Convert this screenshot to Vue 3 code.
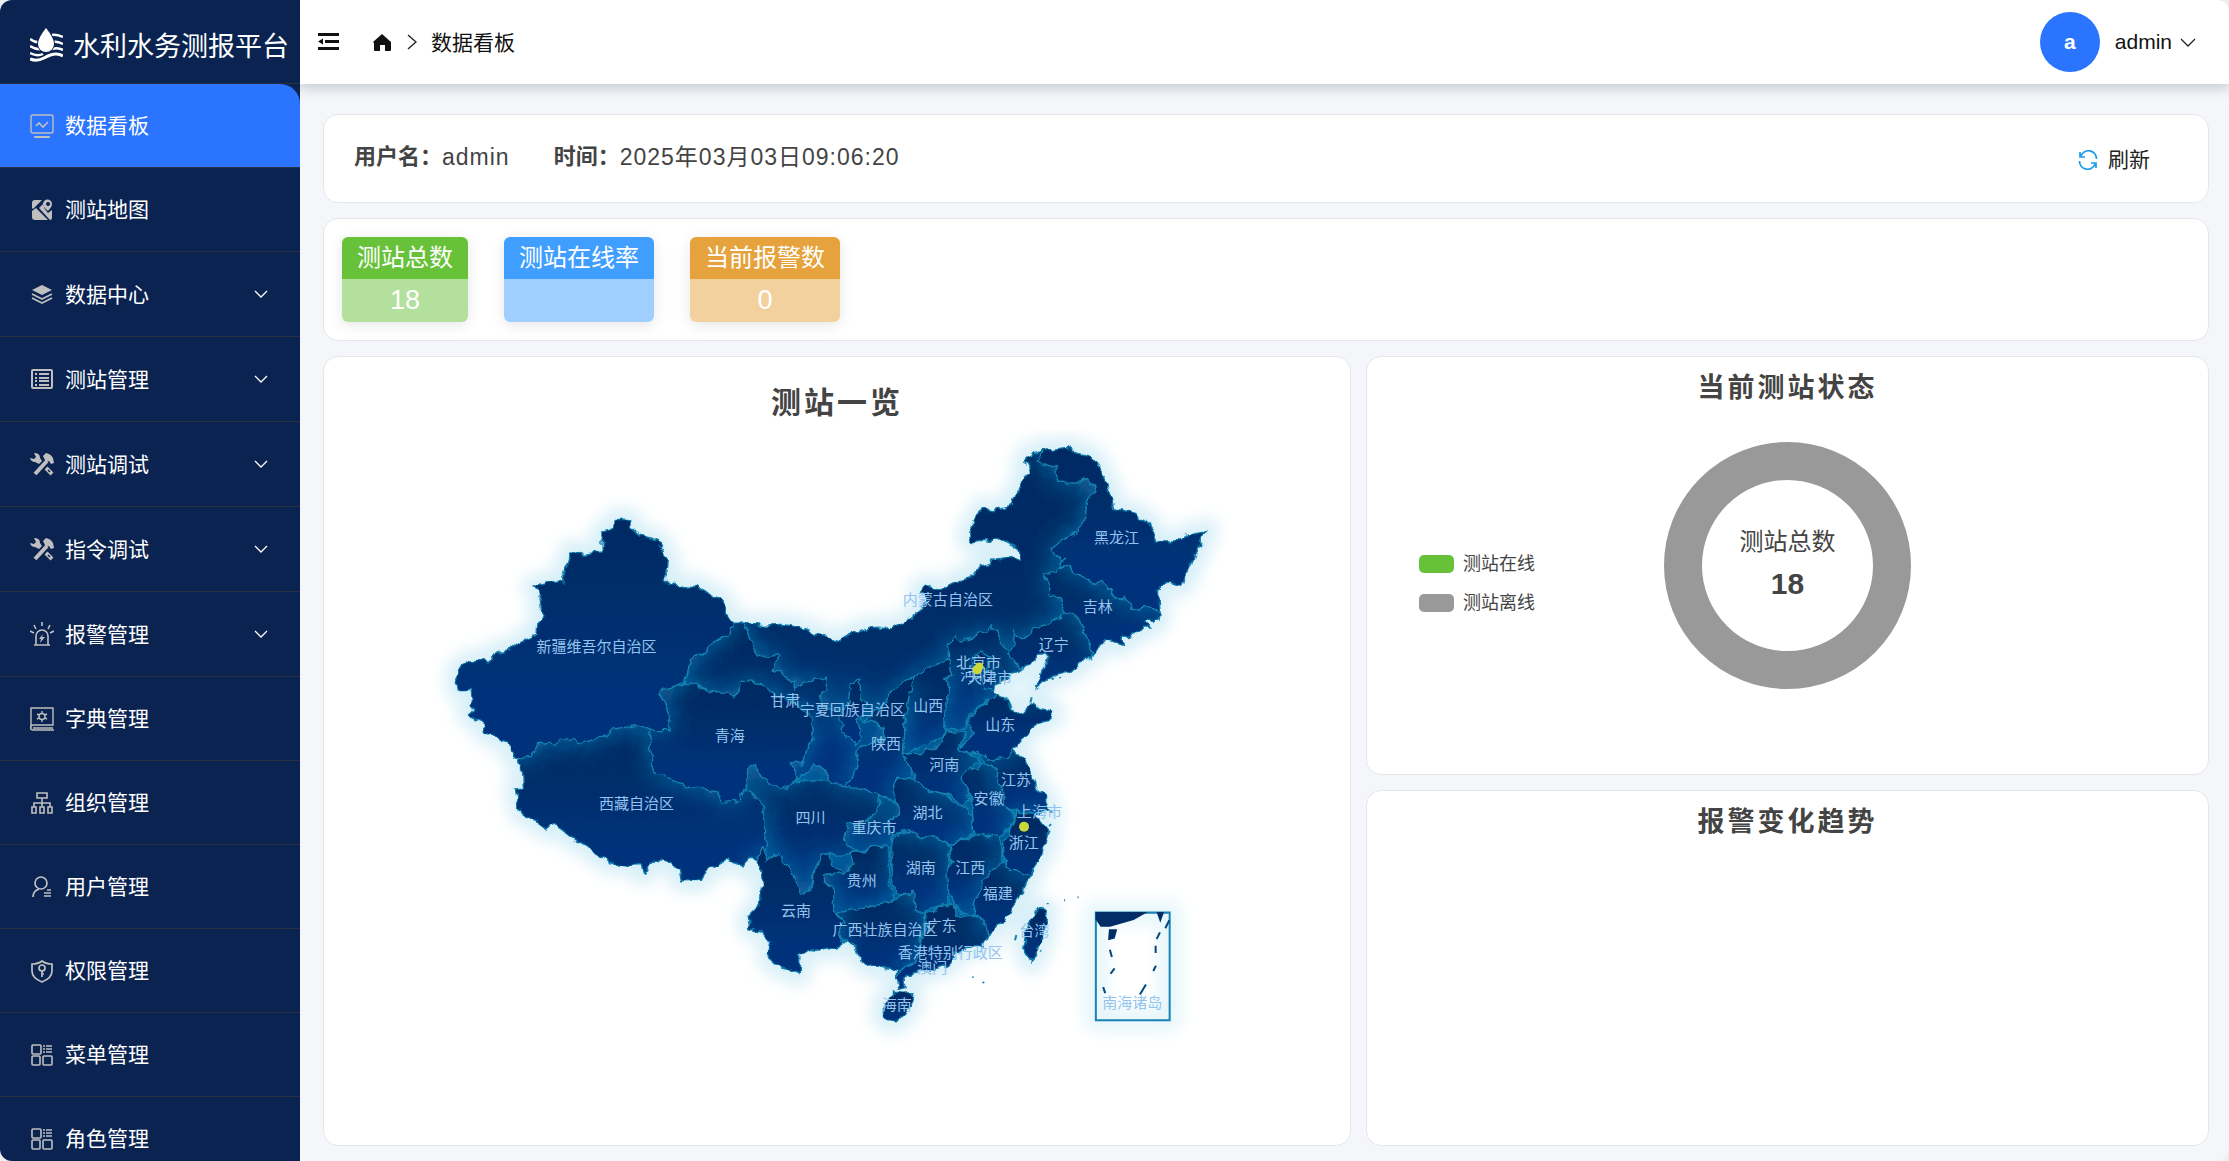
<script setup>
import { ref } from 'vue'

const active = ref('数据看板')

const menu = [
  { name: '数据看板', icon: 'board' },
  { name: '测站地图', icon: 'map' },
  { name: '数据中心', icon: 'layers', sub: true },
  { name: '测站管理', icon: 'list', sub: true },
  { name: '测站调试', icon: 'tools', sub: true },
  { name: '指令调试', icon: 'tools', sub: true },
  { name: '报警管理', icon: 'alarm', sub: true },
  { name: '字典管理', icon: 'book' },
  { name: '组织管理', icon: 'org' },
  { name: '用户管理', icon: 'user' },
  { name: '权限管理', icon: 'shield' },
  { name: '菜单管理', icon: 'grid' },
  { name: '角色管理', icon: 'grid' },
]

const stats = [
  { name: '测站总数', value: '18', tone: 'green' },
  { name: '测站在线率', value: '', tone: 'blue' },
  { name: '当前报警数', value: '0', tone: 'orange' },
]

const outline =
  'M530 268 570 268 572 290 600 315 630 325 655 332 670 360 686 390 682 420 674 445 690 460 725 465 775 470 810 490 845 508 858 545 880 578 912 578 960 585 1030 582 1075 590 1120 608 1160 620 1200 632 1240 608 1290 595 1360 592 1400 572 1445 535 1460 510 1438 485 1455 465 1500 478 1525 474 1550 448 1595 440 1615 408 1640 402 1660 390 1700 385 1740 386 1738 370 1720 345 1700 335 1680 322 1655 334 1625 330 1595 335 1583 320 1605 270 1627 234 1660 245 1700 228 1720 222 1717 208 1740 165 1752 140 1770 130 1768 105 1748 96 1775 68 1805 62 1880 52 1915 68 1950 75 1975 110 1995 155 2010 190 2025 240 2085 250 2125 280 2140 310 2150 335 2205 335 2240 315 2297 300 2280 320 2283 345 2265 365 2250 410 2223 465 2180 455 2150 478 2156 550 2152 570 2110 570 2130 590 2105 590 2085 612 2045 622 2045 642 1995 628 1960 670 1925 695 1895 722 1840 735 1788 772 1798 745 1805 718 1825 688 1812 673 1785 675 1770 700 1745 713 1720 730 1695 745 1665 762 1662 785 1685 800 1705 808 1715 835 1725 850 1745 845 1770 820 1805 835 1840 842 1835 862 1795 875 1770 895 1745 925 1720 955 1740 982 1755 995 1770 1025 1785 1070 1815 1100 1818 1125 1830 1140 1785 1150 1800 1175 1825 1190 1815 1250 1785 1300 1760 1350 1730 1415 1705 1445 1670 1490 1640 1515 1625 1545 1580 1550 1540 1570 1525 1600 1480 1615 1440 1620 1395 1635 1388 1645 1398 1670 1380 1675 1368 1640 1370 1615 1340 1610 1290 1608 1260 1585 1250 1550 1215 1530 1190 1555 1165 1550 1140 1558 1110 1552 1080 1570 1078 1630 1055 1618 1020 1610 985 1580 995 1540 965 1500 930 1490 925 1460 965 1420 968 1360 962 1315 940 1280 925 1280 910 1308 860 1285 800 1320 785 1348 725 1350 720 1320 695 1295 640 1288 612 1330 605 1298 550 1302 505 1292 480 1275 430 1240 410 1230 365 1195 345 1180 325 1198 290 1170 245 1148 235 1115 228 1075 252 1070 250 1030 235 1000 240 983 220 975 212 935 175 925 135 905 130 875 85 850 100 835 92 780 58 780 48 745 60 715 100 690 155 692 170 665 210 658 260 625 290 612 292 580 308 560 305 525 295 480 282 470 345 452 375 455 370 435 382 400 395 362 430 372 488 365 487 305 520 295Z'
const islands = [
  'M1360 1685 1415 1682 1410 1730 1365 1775 1330 1760 1330 1715Z',
  'M1800 1430 1818 1440 1810 1510 1775 1595 1748 1550 1760 1490Z',
]

// Drawn back to front: each shape covers the loose edges of the ones before it.
const provinces = [
  'M1320 1095 1310 1140 1280 1170 1220 1180 1210 1230 1250 1265 1300 1245 1345 1250 1355 1210 1340 1175 1385 1145 1360 1115Z',
  'M920 990 960 1010 990 1060 1200 1040 1260 1070 1320 1095 1310 1140 1280 1175 1220 1180 1210 1230 1250 1260 1225 1270 1155 1270 1125 1310 1100 1400 1060 1400 900 1300 900 1050Z',
  'M912 578 930 630 955 680 1015 670 1018 690 1000 718 1040 735 1070 775 1090 752 1140 748 1165 740 1160 775 1140 800 1140 825 1210 850 1255 860 1330 885 1330 920 1255 955 1250 1010 1228 1050 1215 1065 1175 1060 1150 1015 1125 995 1090 1030 1080 1045 1050 1040 1000 950 700 800 735 755 755 685 790 670 825 632 870 610 880 580Z',
  'M180 900 400 850 640 860 860 1090 925 1075 960 1110 975 1160 980 1250 985 1285 950 1290 900 1400 150 1400Z',
  'M655 788 735 755 800 775 840 790 890 798 905 752 970 760 1010 795 1060 820 1110 850 1120 900 1100 970 1085 1000 1050 990 1075 1040 1045 1070 1000 1065 960 1040 950 1005 925 1000 920 1060 900 1110 850 1115 830 1080 760 1070 700 1050 650 1030 635 985 630 900 680 895 690 850 670 810Z',
  'M1545 612 1525 650 1530 690 1540 735 1510 760 1525 790 1510 860 1515 895 1570 900 1585 860 1640 810 1690 800 1760 715 1715 680 1705 655 1680 640 1665 605 1650 588 1635 605 1600 622 1560 632Z',
  'M1595 690 1620 662 1650 680 1640 720 1600 725Z',
  'M1640 715 1665 740 1662 780 1635 775 1625 745Z',
  'M1530 685 1465 710 1420 738 1408 780 1395 860 1390 970 1465 940 1510 915 1512 860 1530 765 1510 745 1540 735Z',
  'M1420 738 1355 785 1335 815 1280 870 1330 890 1330 925 1255 955 1250 1010 1228 1050 1215 1068 1260 1070 1320 1095 1362 1115 1365 1080 1360 1045 1410 1045 1415 1020 1390 970 1395 860 1410 780Z',
  'M1260 745 1230 765 1225 815 1200 855 1210 905 1250 940 1265 905 1250 870 1270 850 1278 820 1262 800Z',
  'M1300 1245 1275 1260 1225 1270 1245 1300 1210 1325 1155 1330 1150 1360 1180 1370 1185 1450 1240 1440 1280 1430 1320 1420 1360 1405 1350 1350 1345 1250Z',
  'M1185 1450 1215 1470 1190 1500 1220 1540 1240 1640 1360 1630 1380 1615 1430 1590 1440 1550 1455 1440 1430 1440 1425 1385 1400 1385 1360 1410 1320 1420 1280 1430Z',
  'M1355 1220 1352 1270 1360 1350 1365 1390 1420 1385 1430 1440 1460 1440 1490 1425 1530 1420 1525 1360 1530 1310 1525 1240 1480 1215 1440 1220 1410 1200Z',
  'M1360 1045 1365 1110 1385 1145 1340 1175 1355 1210 1410 1200 1440 1220 1480 1215 1530 1240 1600 1210 1595 1160 1580 1130 1540 1115 1515 1090 1460 1075 1430 1050 1410 1045Z',
  'M1515 900 1510 935 1450 965 1390 972 1415 1020 1430 1050 1460 1075 1520 1090 1560 1120 1590 1115 1580 1075 1562 1045 1585 1005 1620 1000 1605 980 1560 955 1575 910Z',
  'M1530 1240 1535 1290 1520 1330 1530 1390 1555 1440 1595 1460 1610 1400 1630 1350 1670 1310 1690 1270 1670 1215 1625 1205 1590 1220Z',
  'M1585 1005 1562 1045 1585 1080 1595 1115 1600 1205 1625 1205 1670 1215 1710 1195 1725 1150 1690 1130 1695 1095 1670 1050 1665 1010 1630 995 1610 1020Z',
  'M1455 1440 1460 1490 1440 1550 1430 1590 1380 1620 1350 1690 1440 1690 1640 1580 1650 1515 1630 1465 1595 1455 1550 1460 1545 1430 1530 1420 1490 1430 1480 1450Z',
  'M1690 1285 1660 1315 1630 1350 1610 1400 1600 1450 1630 1465 1640 1515 1700 1510 1800 1370 1760 1328 1710 1320Z',
  'M1610 975 1630 995 1665 1010 1670 1050 1695 1095 1690 1130 1730 1145 1840 1145 1820 1050 1760 990 1710 950 1670 985 1640 965Z',
  'M1730 1145 1710 1195 1690 1230 1690 1270 1710 1320 1760 1328 1800 1350 1850 1250 1840 1150Z',
  'M1580 880 1600 910 1558 955 1590 975 1612 962 1640 985 1700 980 1725 950 1900 900 1880 760 1680 770 1665 800 1620 830Z',
  'M1885 545 1840 575 1780 600 1745 625 1725 600 1722 640 1705 670 1740 715 1740 800 1960 760 1955 665 1940 610 1920 570Z',
  'M1810 425 1825 460 1825 495 1855 495 1875 545 1920 570 1940 610 1955 670 2180 660 2155 545 2120 520 2075 540 2055 500 2035 510 2005 480 1985 460 1925 445 1895 420 1885 408 1855 408 1840 430Z',
  'M1808 65 1790 98 1845 110 1852 160 1925 158 1940 145 1965 175 1938 220 1935 262 1910 310 1870 325 1835 355 1860 390 1875 380 1855 405 1885 408 1895 420 1925 445 1985 460 2005 480 2035 510 2055 500 2075 540 2120 520 2155 545 2320 500 2320 250 2040 40 1840 30Z',
  'M970 1250 945 1290 880 1450 900 1650 1140 1650 1215 1550 1190 1500 1215 1470 1185 1450 1180 1370 1150 1360 1155 1330 1210 1325 1175 1300 1170 1270 1150 1270 1125 1315 1115 1380 1080 1390 1055 1325 1010 1265 985 1290Z',
  'M245 983 275 980 295 938 345 942 370 922 430 938 500 915 520 895 590 885 640 900 685 900 690 850 670 810 655 788 735 755 755 685 790 670 825 632 870 610 880 578 900 200 0 200 0 1000Z',
]

const labels = [
  ['新疆维吾尔自治区', 471, 653], ['西藏自治区', 591, 1123], ['青海', 870, 918],
  ['甘肃', 1036, 813], ['宁夏回族自治区', 1237, 840], ['四川', 1112, 1163],
  ['云南', 1068, 1442], ['贵州', 1265, 1352], ['重庆市', 1302, 1195],
  ['湖南', 1442, 1313], ['湖北', 1462, 1150], ['河南', 1512, 1005],
  ['陕西', 1338, 941], ['山西', 1464, 827], ['山东', 1680, 885],
  ['江苏', 1727, 1051], ['安徽', 1645, 1107], ['上海市', 1797, 1147],
  ['浙江', 1750, 1238], ['江西', 1590, 1313], ['福建', 1672, 1390],
  ['台湾', 1782, 1502], ['广东', 1504, 1488], ['广西壮族自治区', 1335, 1499],
  ['香港特别行政区', 1530, 1568], ['澳门', 1476, 1612], ['海南', 1370, 1724],
  ['南海诸岛', 2075, 1718], ['内蒙古自治区', 1523, 510], ['黑龙江', 2028, 325],
  ['吉林', 1972, 532], ['辽宁', 1840, 645], ['河北', 1605, 735],
  ['天津市', 1648, 745], ['北京市', 1615, 700],
]
</script>

<template>
  <div class="shell">
    <aside class="sidebar">
      <div class="brand">
        <svg class="logo" viewBox="0 0 33 34" aria-hidden="true">
          <g fill="none" stroke="#fff" stroke-width="2.4">
            <path d="M0 11q5 4 10 3M0 18q6 4 12 3M22 7q4-1 11 2M23 14q4-1 10 2M22 21q6-2 11 1" />
            <path d="M0 31q7 3 14-1t12-4q4 0 7 2" stroke-width="3" />
            <path d="M0 25q7 4 13 1" />
          </g>
          <path
            d="M16 0q8 10 8 16a8 8 0 0 1-16 0q0-6 8-16Z"
            fill="#fff"
            stroke="#0a2351"
            stroke-width="2"
            paint-order="stroke"
          />
        </svg>
        <h1>水利水务测报平台</h1>
      </div>
      <nav>
        <button
          v-for="item in menu"
          :key="item.name"
          type="button"
          class="item"
          :class="{ active: item.name === active, sub: item.sub }"
          @click="active = item.name"
        >
          <svg class="icon" viewBox="0 0 24 24" fill="none" stroke="currentColor" stroke-width="1.4" aria-hidden="true">
            <g v-if="item.icon === 'board'">
              <rect x="1" y="1" width="22" height="18" rx="2" />
              <path d="M6 12l3-3 4 4 5-5" stroke-width="1.7" />
              <path d="M5 23h14" stroke-width="2" stroke-linecap="round" />
            </g>
            <g v-else-if="item.icon === 'map'" fill="currentColor" stroke="none">
              <path d="M2 5q0-3 3-3h7L3 11l-1-1ZM2 13l4-3 12 12H5q-3 0-3-3ZM22 12v7q0 3-2 3L9 10l4-4q1 5 5 9Z" />
              <path fill-rule="evenodd" d="M18 13q-5-4-5-7a4 4 0 0 1 9 0q0 3-4 7Zm0-9a2 2 0 1 0 .1 0Z" />
            </g>
            <g v-else-if="item.icon === 'layers'">
              <path d="M12 3l10 5-10 5L2 8Z" fill="currentColor" stroke="none" />
              <path d="M2 12l10 5 10-5M2 16l10 5 10-5" stroke-width="1.7" />
            </g>
            <g v-else-if="item.icon === 'list'">
              <rect x="2" y="3" width="20" height="18" rx="1" stroke-width="2" />
              <path d="M5 7h2M5 11h2M5 14h2M5 18h2M9 7h10M9 11h10M9 14h10M9 18h10" stroke-width="2" />
            </g>
            <g v-else-if="item.icon === 'tools'" stroke="currentColor">
              <path d="M5 22L17 9" stroke-width="4" />
              <path d="M13 4l3-3q5 1 7 5l1 5-3 1-2-3-3 1Z" fill="currentColor" stroke="none" />
              <path d="M4 1q6 0 6 5l2 3-3 3-4-2q-4 0-5-4l4 1 2-2Z" fill="currentColor" stroke="none" />
              <path d="M16 16l6 6" stroke-width="4" />
              <path d="M18 18l2 2" stroke="#0a2351" stroke-width="1.4" />
            </g>
            <g v-else-if="item.icon === 'alarm'">
              <path d="M4 23h16M6 23V14a6 6 0 0 1 12 0v9M12 0v4M4 3l2 4M20 3l-2 4M0 9l4 2M24 9l-4 2" stroke-width="1.6" />
              <path d="M13 12l-4 5h2l-1 4 5-6h-3Z" fill="currentColor" stroke="none" />
            </g>
            <g v-else-if="item.icon === 'book'">
              <path d="M1 21V1h22v17H3a2 2 0 0 0 0 5h21M3 21h20" />
              <circle cx="12" cy="9.5" r="3" />
              <path d="M12 4v2M12 13v2M7 7l2 1M15 11l2 1M7 12l2-1M15 8l2-1" />
            </g>
            <g v-else-if="item.icon === 'org'" stroke-width="1.6">
              <path d="M7 2h10v5H7ZM2 16h4v6H2ZM10 16h4v6h-4ZM18 16h4v6h-4ZM12 7v9M4 16v-4h16v4" />
            </g>
            <g v-else-if="item.icon === 'user'" stroke-width="1.7">
              <circle cx="11" cy="8" r="6" />
              <path d="M3 22q0-6 6-8M17 15h4M14 18h7M14 21h7" />
            </g>
            <g v-else-if="item.icon === 'shield'" stroke-width="1.7">
              <path d="M12 2q4 3 10 3v7q0 7-10 11Q2 19 2 12V5q6 0 10-3Z" />
              <circle cx="12" cy="9" r="3" />
              <path d="M12 12v6M12 15h2" />
            </g>
            <g v-else stroke-width="1.6">
              <rect x="2" y="2" width="9" height="9" rx="1" />
              <rect x="2" y="13" width="8" height="9" rx="1" />
              <rect x="13" y="13" width="9" height="9" rx="1" />
              <path d="M13 3h2M16 3h6M13 6h2M16 6h6M13 9h2M16 9h6" />
            </g>
          </svg>
          <span>{{ item.name }}</span>
          <svg v-if="item.sub" class="arrow" viewBox="0 0 14 8" aria-hidden="true">
            <path d="M1 1l6 6 6-6" fill="none" stroke="#fff" stroke-width="1.3" />
          </svg>
        </button>
      </nav>
    </aside>

    <div class="page">
      <header class="topbar">
        <button type="button" class="plain" aria-label="collapse">
          <svg width="22" height="18" viewBox="0 0 22 18" aria-hidden="true">
            <path d="M0 0h21v3H0ZM7 7h14v3H7ZM0 14h21v3H0ZM0 8.500l5-3v6Z" fill="#111" />
          </svg>
        </button>
        <a class="home" href="#" aria-label="home">
          <svg width="18" height="17" viewBox="0 0 18 17" aria-hidden="true">
            <path d="M9 0l9 8v8q0 1-1 1h-5v-6H7v6H2q-1 0-1-1V9L0 8Z" fill="#111" />
          </svg>
        </a>
        <svg class="sep" width="10" height="16" viewBox="0 0 10 16" aria-hidden="true">
          <path d="M1 1l8 7-8 7" fill="none" stroke="#222" stroke-width="1.4" />
        </svg>
        <span class="crumb">数据看板</span>
        <button type="button" class="account">
          <span class="avatar">a</span>
          <span>admin</span>
          <svg width="16" height="9" viewBox="0 0 16 9" aria-hidden="true">
            <path d="M1 1l7 7 7-7" fill="none" stroke="#222" stroke-width="1.3" />
          </svg>
        </button>
      </header>

      <main>
        <section class="card info">
          <b>用户名：</b><span class="val">admin</span>
          <b>时间：</b><span class="val">2025年03月03日09:06:20</span>
          <button type="button" class="refresh">
            <svg width="20" height="20" viewBox="0 0 20 20" aria-hidden="true">
              <g fill="none" stroke="#1e9ae8" stroke-width="1.7">
                <path d="M3 6a8 8 0 0 1 15.500 3M17 14a8 8 0 0 1-15.500-3M2 2v5h5M18 18v-5h-5" />
              </g>
            </svg>
            <span>刷新</span>
          </button>
        </section>

        <section class="card stats">
          <div v-for="s in stats" :key="s.name" class="stat" :class="s.tone">
            <div class="name">{{ s.name }}</div>
            <div class="num">{{ s.value }}</div>
          </div>
        </section>

        <div class="boards">
          <section class="card map">
            <h2>测站一览</h2>
            <svg class="china" viewBox="-309 0 3000 2100" role="img" aria-label="测站一览">
              <defs>
                <linearGradient id="land" x1="0" y1="0" x2="0" y2="1">
                  <stop offset="0" stop-color="#022b61" />
                  <stop offset=".35" stop-color="#022d69" />
                  <stop offset=".75" stop-color="#02327c" />
                  <stop offset="1" stop-color="#02327c" />
                </linearGradient>
                <clipPath id="shape"><path :d="outline" /></clipPath>
                <filter id="halo" x="-10%" y="-10%" width="120%" height="120%">
                  <feGaussianBlur stdDeviation="22" />
                </filter>
                <filter id="glow" x="-60%" y="-60%" width="220%" height="220%">
                  <feDropShadow dx="0" dy="0" stdDeviation="36" flood-color="#0f7cb4" flood-opacity=".8" />
                </filter>
                <filter id="coast" x="-5%" y="-5%" width="110%" height="110%">
                  <feTurbulence type="fractalNoise" baseFrequency=".035" numOctaves="2" seed="4" />
                  <feDisplacementMap in="SourceGraphic" scale="26" xChannelSelector="R" yChannelSelector="G" />
                </filter>
              </defs>

              <g filter="url(#halo)" fill="#a9dcee" stroke="#d9f0f8" stroke-width="70" stroke-linejoin="round">
                <path :d="outline" />
                <path v-for="d in islands" :key="d" :d="d" />
                <rect x="1966" y="1445" width="221" height="322" fill="#fff" stroke="#e6f6fa" />
              </g>

              <g filter="url(#coast)">
                <g clip-path="url(#shape)">
                  <path :d="outline" fill="url(#land)" />
                  <path
                    v-for="d in provinces"
                    :key="d"
                    :d="d"
                    fill="url(#land)"
                    stroke="#1484b0"
                    stroke-width="4"
                    filter="url(#glow)"
                  />
                </g>
                <path :d="outline" fill="none" stroke="#0b78aa" stroke-width="4" />
                <path v-for="d in islands" :key="d" :d="d" fill="url(#land)" stroke="#0b78aa" stroke-width="4" />
              </g>

              <g stroke="#1683b5" stroke-width="6">
                <path d="M1966 1445h221v322h-221Z" fill="none" />
                <path d="M1968 1446h142l-32 18-70 20h-26l-14-20ZM2152 1446h14l-7 20ZM2008 1498h18l-6 22-14 4Z" fill="#022d66" stroke="#022d66" />
                <path d="M2186 1468l-12 24M2158 1504l-10 20M2008 1556l6 22M2145 1544v22M2022 1612l-12 16M2146 1604l-8 16M1988 1668l6 18M2116 1660l-18 30" fill="none" stroke="#02477f" />
                <path d="M1871 1408h3M1911 1399h3M1598 1636v4M1628 1652l3 4M1826 1186l6-6M1828 1200l-6 12M1774 800l-4 16M1834 744l6 2M1858 740l2 3M1728 1512l-4 16M1800 1558l2 3M1822 1416v4" fill="none" />
              </g>

              <text v-for="[name, x, y] in labels" :key="name" :x="x" :y="y + 13">{{ name }}</text>
              <g fill="#ccd83a">
                <circle cx="1611" cy="718" r="14" />
                <circle cx="1617" cy="708" r="12" />
                <circle cx="1751" cy="1188" r="15" />
              </g>
            </svg>
          </section>

          <section class="card status">
            <h3>当前测站状态</h3>
            <div class="chart">
              <ul>
                <li><i class="on"></i>测站在线</li>
                <li><i></i>测站离线</li>
              </ul>
              <div class="donut">
                <span>测站总数</span>
                <strong>18</strong>
              </div>
            </div>
          </section>

          <section class="card trend">
            <h3>报警变化趋势</h3>
          </section>
        </div>
      </main>
    </div>
  </div>
</template>

<style>
body {
  margin: 0;
  background: #eceef0;
}
</style>

<style scoped>
* {
  box-sizing: border-box;
}
.shell {
  display: flex;
  height: 100vh;
  overflow: hidden;
  border-radius: 12px;
  background: #f5f6f9;
  color: #111;
  font-family: "Liberation Sans", "Noto Sans CJK SC", sans-serif;
  font-size: 21px;
}
button {
  border: 0;
  background: none;
  color: inherit;
  font: inherit;
  cursor: pointer;
}
h1, h2, h3, ul {
  margin: 0;
  padding: 0;
}
.sidebar {
  position: relative;
  z-index: 1;
  flex: none;
  width: 300px;
  overflow: hidden;
  background: #0a2351;
  color: #fff;
}
.brand {
  display: flex;
  align-items: center;
  gap: 10px;
  height: 84px;
  padding: 6px 0 0 30px;
  border-bottom: 1px solid #2a3140;
  white-space: nowrap;
}
.brand h1 {
  font-size: 27px;
  font-weight: 400;
}
.logo {
  flex: none;
  width: 33px;
  height: 34px;
}
.item {
  display: flex;
  align-items: center;
  width: 100%;
  height: 84px;
  padding: 0 32px 0 30px;
  border-bottom: 1px solid #2a3140;
  text-align: left;
}
.item.sub {
  height: 85px;
}
.item.active {
  border-top-right-radius: 20px;
  background: #2a74ff;
}
.item span, .crumb {
  padding-bottom: 3px;
}
.icon {
  width: 24px;
  height: 24px;
  margin-right: 11px;
  color: #bfbfbf;
}
.arrow {
  width: 14px;
  height: 8px;
  margin-left: auto;
}
.page {
  flex: 1;
  min-width: 0;
}
.topbar {
  position: relative;
  display: flex;
  align-items: center;
  height: 84px;
  padding: 0 33px 0 18px;
  background: #fff;
  box-shadow: 0 2px 12px 2px #c3cbd2;
}
.plain {
  display: flex;
  padding: 0;
}
.home {
  display: flex;
  margin-left: 33px;
}
.sep {
  margin: 0 14px 0 16px;
}
.account {
  display: flex;
  align-items: center;
  margin-left: auto;
  padding: 0;
}
.account svg {
  margin-left: 8px;
}
.avatar {
  width: 60px;
  margin-right: 15px;
  border-radius: 50%;
  background: #2a74ff;
  color: #fff;
  font-weight: 700;
  line-height: 60px;
  text-align: center;
}
main {
  display: flex;
  flex-direction: column;
  gap: 15px;
  padding: 30px 20px 16px 23px;
}
.card {
  border: 1px solid #e4e7ea;
  border-radius: 15px;
  background: #fff;
  color: #444;
}
.info {
  display: flex;
  align-items: center;
  height: 89px;
  padding: 0 58px 3px 30px;
  font-size: 22px;
  line-height: 32px;
}
.val {
  margin-right: 44px;
  font-size: 23px;
  letter-spacing: 1px;
}
.refresh {
  display: flex;
  align-items: center;
  gap: 10px;
  margin-left: auto;
  padding: 6px 0 0;
  color: #222;
  font-size: 21px;
}
.stats {
  display: flex;
  gap: 36px;
  padding: 18px;
}
.stat {
  overflow: hidden;
  border-radius: 6px;
  box-shadow: 0 3px 14px rgba(0, 0, 0, 0.1);
  color: #fff;
  font-size: 24px;
  text-align: center;
}
.stat .name {
  padding: 0 15px;
  line-height: 42px;
}
.stat .num {
  height: 43px;
  font-size: 27px;
  line-height: 43px;
}
.green .name { background: #67c23a; }
.green .num { background: #b3e19d; }
.blue .name { background: #409eff; }
.blue .num { background: #a0cfff; }
.orange .name { background: #e6a23c; }
.orange .num { background: #f3d19e; }
.boards {
  display: grid;
  grid-template-columns: 1028fr 843fr;
  grid-template-rows: 418fr 356fr;
  gap: 15px;
}
.map {
  grid-row: span 2;
  padding: 25px 12px 14px;
}
h2, h3 {
  letter-spacing: 3px;
  text-align: center;
}
h2 {
  font-size: 30px;
  line-height: 42px;
}
h3 {
  padding-top: 11px;
  font-size: 27px;
  line-height: 40px;
}
.china {
  display: block;
  width: 100%;
  margin-top: 6px;
}
.china text {
  fill: #94c4ee;
  font-size: 45px;
  text-anchor: middle;
}
.status {
  display: flex;
  flex-direction: column;
}
.chart {
  display: grid;
  grid-template-columns: 1fr auto 1fr;
  align-items: start;
  padding-top: 34px;
}
.chart ul {
  display: grid;
  gap: 13px;
  padding: 109px 0 0 52px;
  list-style: none;
  font-size: 18px;
}
.chart li {
  display: flex;
  align-items: center;
  gap: 9px;
  line-height: 26px;
}
.chart i {
  width: 35px;
  height: 18px;
  border-radius: 5px;
  background: #999;
}
.chart i.on {
  background: #67c23a;
}
.donut {
  display: flex;
  flex-direction: column;
  align-items: center;
  justify-content: center;
  width: 247px;
  height: 247px;
  padding-bottom: 6px;
  border: 38px solid #999;
  border-radius: 50%;
  font-size: 24px;
  line-height: 42px;
}
.donut strong {
  font-size: 30px;
}
</style>
